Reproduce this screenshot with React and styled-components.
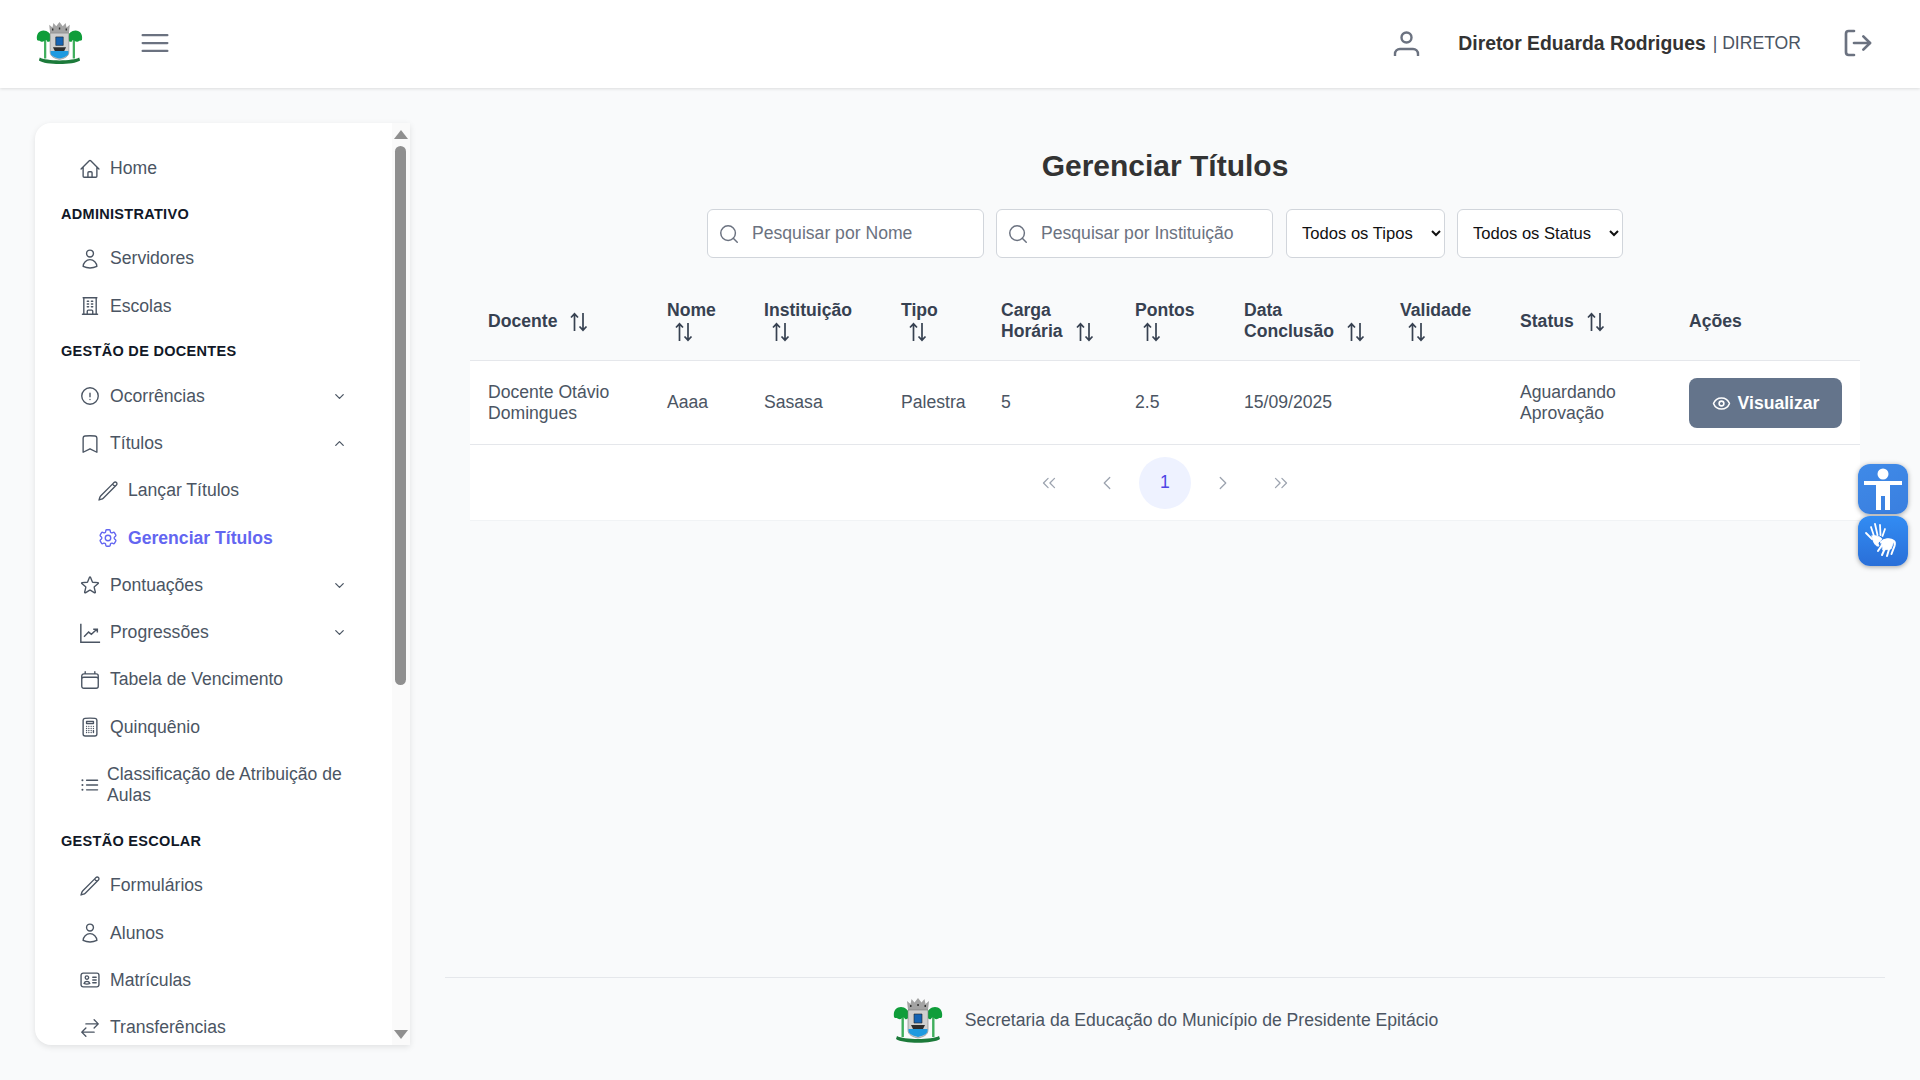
import styled, { createGlobalStyle } from "styled-components";
import { LogOut, Search, Eye, ChevronDown, ChevronUp, ChevronsLeft, ChevronLeft, ChevronRight, ChevronsRight } from "lucide-react";
import {
  HiOutlineBars3,
  HiOutlineHome,
  HiOutlineUser,
  HiOutlineBuildingOffice,
  HiOutlineExclamationCircle,
  HiOutlineBookmark,
  HiOutlinePencil,
  HiOutlineCog6Tooth,
  HiOutlineStar,
  HiOutlineCalendar,
  HiOutlineCalculator,
  HiOutlineListBullet,
  HiOutlineIdentification,
  HiOutlineArrowsRightLeft,
} from "react-icons/hi2";

const GlobalStyle = createGlobalStyle`
  html, body {
    margin: 0;
    padding: 0;
    height: 100%;
    overflow: hidden;
    background: #f9fafb;
    font-family: "Liberation Sans", Arial, sans-serif;
  }
  * { box-sizing: border-box; }
`;

const Page = styled.div`
  width: 1920px;
  height: 1080px;
  display: flex;
  flex-direction: column;
  background: #f9fafb;
`;

const Header = styled.header`
  height: 88px;
  flex-shrink: 0;
  display: flex;
  align-items: center;
  justify-content: space-between;
  padding: 0 46px 2px 36px;
  background: #fff;
  box-shadow: 0 1px 3px rgba(0, 0, 0, 0.12);
  position: relative;
  z-index: 2;
`;

const HeaderLeft = styled.div`
  display: flex;
  align-items: center;
  gap: 54px;
`;

const MenuIcon = styled(HiOutlineBars3)`
  color: #6b7280;
`;

const HeaderRight = styled.div`
  display: flex;
  align-items: center;
  color: #6b7280;
`;

const UserName = styled.span`
  margin-left: 38px;
  font-size: 19.36px;
  font-weight: 700;
  color: #333;
`;

const UserRole = styled.span`
  margin-left: 7px;
  margin-right: 41px;
  font-size: 17.6px;
  color: #4b5563;
`;

const Body = styled.div`
  flex: 1;
  display: flex;
  min-height: 0;
`;

const Sidebar = styled.aside`
  position: relative;
  width: 375px;
  height: 922px;
  margin: 35px 0 0 35px;
  flex-shrink: 0;
  background: #fff;
  border-radius: 16px 0 0 16px;
  box-shadow: 0 2px 6px rgba(0, 0, 0, 0.1);
  overflow: hidden;
`;

const SideInner = styled.nav`
  padding: 22px 0 0 0;
`;

/* the browser's scrollbar, it lies over the right edge of the panel */
const ScrollTrack = styled.div`
  position: absolute;
  top: 0;
  right: 0;
  bottom: 0;
  width: 18px;
  background: #fafafa;
`;

const ScrollThumb = styled.div`
  position: absolute;
  top: 23px;
  left: 3px;
  width: 11px;
  height: 539px;
  border-radius: 6px;
  background: #8f8f8f;
`;

const ScrollArrow = styled.div`
  position: absolute;
  left: 2px;
  ${(p) => (p.$down ? "bottom: 6px;" : "top: 7px;")}
  width: 0;
  height: 0;
  border-left: 7px solid transparent;
  border-right: 7px solid transparent;
  ${(p) => (p.$down ? "border-top" : "border-bottom")}: 9px solid #8f8f8f;
`;

const SectionTitle = styled.div`
  padding: 0 0 0 26px;
  height: 43px;
  display: flex;
  align-items: center;
  font-size: 14.5px;
  font-weight: 700;
  letter-spacing: 0.3px;
  color: #111827;
`;

const NavRow = styled.div`
  display: flex;
  align-items: center;
  min-height: ${(p) => p.$h || 47.25}px;
  margin-right: 63px;
  padding-left: ${(p) => (p.$sub ? 62 : 44)}px;
  color: ${(p) => (p.$active ? "#6366f1" : "#4b5563")};
  font-weight: ${(p) => (p.$active ? 700 : 400)};
  font-size: 17.6px;
  line-height: 21px;

  svg.main {
    width: 22px;
    height: 22px;
    flex-shrink: 0;
    margin-right: ${(p) => p.$gap ?? 9}px;
  }
`;

const NavText = styled.span`
  flex: 1;
`;

const Main = styled.main`
  flex: 1;
  min-width: 0;
  display: flex;
  flex-direction: column;
  margin: 0 35px;
`;

const Content = styled.div`
  flex: 1;
  padding: 58px 25px 0;
`;

const Title = styled.h1`
  margin: 0 0 23px;
  text-align: center;
  font-size: 30px;
  line-height: 40px;
  font-weight: 700;
  color: #333;
`;

const Filters = styled.div`
  display: flex;
  justify-content: center;
  gap: 12px;
  margin-bottom: 24px;
`;

const SearchBox = styled.label`
  width: 277px;
  height: 49px;
  display: flex;
  align-items: center;
  gap: 10px;
  padding: 0 10px;
  background: #fff;
  border: 1px solid #d1d5db;
  border-radius: 6px;
  color: #6b7280;
`;

const SearchInput = styled.input`
  flex: 1;
  min-width: 0;
  border: 0;
  outline: 0;
  background: transparent;
  font: inherit;
  font-size: 17.6px;
  color: #333;
  &::placeholder { color: #6b7280; opacity: 1; }
`;

const Select = styled.select`
  width: ${(p) => p.$w}px;
  height: 49px;
  padding: 0 0 0 11px;
  background: #fff;
  border: 1px solid #d1d5db;
  border-radius: 6px;
  font: inherit;
  font-size: 16.6px;
  color: #111;
  ${SearchBox} + & { margin-left: 1px; }
`;

const Table = styled.table`
  width: 1390px;
  table-layout: fixed;
  border-collapse: collapse;
`;

const Th = styled.th`
  padding: 18px 16px 18px 18px;
  text-align: left;
  font-size: 17.6px;
  line-height: 21px;
  font-weight: 700;
  color: #374151;
  border-bottom: 1px solid #e5e7eb;
`;

const SortIcon = styled.svg`
  width: 18px;
  height: 20px;
  margin-left: 8px;
  vertical-align: -5px;
  color: #374151;
`;

const Tr = styled.tr`
  background: #fff;
`;

const Td = styled.td`
  padding: 16px 18px;
  font-size: 17.6px;
  line-height: 21px;
  color: #4b5563;
  border-bottom: 1px solid #e5e7eb;
`;

const ViewButton = styled.button`
  width: 153px;
  height: 50px;
  margin-top: 1px;
  display: flex;
  align-items: center;
  justify-content: center;
  gap: 7px;
  border: 0;
  border-radius: 8px;
  background: #64748b;
  color: #fff;
  font: inherit;
  font-size: 17.6px;
  font-weight: 700;
`;

const Pagination = styled.div`
  height: 76px;
  display: flex;
  align-items: center;
  justify-content: center;
  gap: 6px;
  background: #fff;
  border-bottom: 1px solid #f1f3f5;
`;

const PageBtn = styled.div`
  width: 52px;
  height: 52px;
  display: flex;
  align-items: center;
  justify-content: center;
  border-radius: 50%;
  font-size: 17.6px;
  color: ${(p) => (p.$active ? "#4f46e5" : "#9ca3af")};
  background: ${(p) => (p.$active ? "#eef2ff" : "transparent")};
`;

const Footer = styled.footer`
  height: 86px;
  margin-bottom: 17px;
  flex-shrink: 0;
  display: flex;
  align-items: center;
  justify-content: center;
  gap: 21px;
  border-top: 1px solid #e5e7eb;
  font-size: 17.6px;
  color: #4b5563;
`;

const A11yDock = styled.div`
  position: fixed;
  top: 464px;
  left: 1858px;
  display: flex;
  flex-direction: column;
  gap: 2px;
`;

const A11yBtn = styled.div`
  width: 50px;
  height: 50px;
  display: flex;
  align-items: center;
  justify-content: center;
  border-radius: 12px;
  background: ${(p) => p.$bg};
  box-shadow: 0 1px 5px rgba(0, 0, 0, 0.35);
`;

const Sort = () => (
  <SortIcon viewBox="0 0 18 20" fill="none" stroke="currentColor" strokeWidth="1.7">
    <path d="M4.5 19V2M1 5.5 4.5 1.8 8 5.5" />
    <path d="M13 1v17M9.5 14.5l3.5 3.7 3.5-3.7" />
  </SortIcon>
);

const TrendIcon = () => (
  <svg className="main" viewBox="0 0 24 24" fill="none" stroke="currentColor" strokeWidth="1.6">
    <path d="M2 2v20h21" />
    <path d="m5.5 16 5-5 3 2.5 6-5.5M15.5 8h4.5v3.5" />
  </svg>
);

const UserIcon = () => (
  <svg width="27" height="25" viewBox="0 0 27 25" fill="none" stroke="currentColor" strokeWidth="2.4">
    <circle cx="13.5" cy="6.5" r="5" />
    <path d="M2 25v-2a5 5 0 0 1 5-5h13a5 5 0 0 1 5 5v2" />
  </svg>
);

const Logo = ({ width, height }) => (
  <svg width={width} height={height} viewBox="0 0 50 48">
    <path d="M4 39c6 4 36 4 42 0l1 3c-7 5-37 5-44 0z" fill="#1c7a3a" />
    <path d="M8.500 20h2.400v20H8.500zM39.100 20h2.400v20h-2.400z" fill="#3fae5c" />
    <path d="M1 20c-1-6 2-10 7-10 4 0 8 3 8 8 0 3-2 5-4 4-1-2-2-2-3-1-2 2-4 1-5 0-1 0-3 0-3-1zM49 20c1-6-2-10-7-10-4 0-8 3-8 8 0 3 2 5 4 4 1-2 2-2 3-1 2 2 4 1 5 0 1 0 3 0 3-1z" fill="#0f9d3a" />
    <path d="M14 4l3.500 3 1-5 3 3.500L25 1l3.500 4.500 3-3.500 1 5L36 4l-1 9H15z" fill="#a3a3a3" />
    <path d="M17 8h1.500v2H17zM24.300 7h1.500v2h-1.500zM31.500 8H33v2h-1.500z" fill="#333" />
    <path d="M15 13h20v20c0 5-5 7-10 8-5-1-10-3-10-8z" fill="#cfcfcf" stroke="#7a7a7a" strokeWidth=".6" />
    <path d="M21 17h8v9h-8z" fill="#1463b4" stroke="#222" strokeWidth=".6" />
    <path d="M18 28h14l-2 4H20z" fill="#2c2c2c" />
    <path d="M15.500 32h19v2c0 3-5 5-9.500 6-4.500-1-9.500-3-9.500-6z" fill="#1e9ae0" />
  </svg>
);

const BodyIcon = () => (
  <svg width="42" height="46" viewBox="0 0 42 46" fill="#fff">
    <circle cx="21" cy="8" r="5.500" />
    <path d="M2 15h38v4H28v25h-5V30h-4v14h-5V19H2z" />
  </svg>
);

const HandsIcon = () => (
  <svg width="38" height="38" viewBox="0 0 38 38" fill="none" stroke="#fff" strokeLinecap="round">
    <path d="M7 5l3 9M11 2l2.500 11M16 3l.5 10M21 7l-2.500 7M2 11l6 6" strokeWidth="1.800" />
    <path d="M8 14c3-1 8 0 10 3l-4 4 1 3c-3 1-6-3-7-10z" fill="#fff" strokeWidth=".8" />
    <path d="M17 20c3-3 9-4 13-1 1.500 1 1 3 .5 5l-3 8M26 24l-3 10M22 24l-4 9M18 23l-4 6" strokeWidth="2" />
    <path d="M17 20c3-3 9-4 13-1l-3 8-8 1z" fill="#fff" strokeWidth=".8" />
  </svg>
);

const NAV = [
  { t: "Home", I: HiOutlineHome },
  { section: "ADMINISTRATIVO" },
  { t: "Servidores", I: HiOutlineUser },
  { t: "Escolas", I: HiOutlineBuildingOffice },
  { section: "GESTÃO DE DOCENTES" },
  { t: "Ocorrências", I: HiOutlineExclamationCircle, chev: "down" },
  { t: "Títulos", I: HiOutlineBookmark, chev: "up" },
  { t: "Lançar Títulos", I: HiOutlinePencil, sub: true },
  { t: "Gerenciar Títulos", I: HiOutlineCog6Tooth, sub: true, active: true },
  { t: "Pontuações", I: HiOutlineStar, chev: "down" },
  { t: "Progressões", I: TrendIcon, chev: "down", custom: true },
  { t: "Tabela de Vencimento", I: HiOutlineCalendar },
  { t: "Quinquênio", I: HiOutlineCalculator },
  { t: "Classificação de Atribuição de Aulas", I: HiOutlineListBullet, h: 68.5, gap: 6 },
  { section: "GESTÃO ESCOLAR" },
  { t: "Formulários", I: HiOutlinePencil },
  { t: "Alunos", I: HiOutlineUser },
  { t: "Matrículas", I: HiOutlineIdentification },
  { t: "Transferências", I: HiOutlineArrowsRightLeft },
];

const COLS = [179, 97, 137, 100, 134, 109, 156, 120, 169, 189];

const HEADS = [
  { t: "Docente", sort: true },
  { t: "Nome", sort: true },
  { t: "Instituição", sort: true },
  { t: "Tipo", sort: true },
  { t: "Carga Horária", sort: true },
  { t: "Pontos", sort: true },
  { t: "Data Conclusão", sort: true },
  { t: "Validade", sort: true },
  { t: "Status", sort: true },
  { t: "Ações" },
];

const CELLS = ["Docente Otávio Domingues", "Aaaa", "Sasasa", "Palestra", "5", "2.5", "15/09/2025", "", "Aguardando Aprovação"];

export default function App() {
  return (
    <Page>
      <GlobalStyle />
      <Header>
        <HeaderLeft>
          <Logo width={47} height={45} />
          <MenuIcon size={36} />
        </HeaderLeft>
        <HeaderRight>
          <UserIcon />
          <UserName>Diretor Eduarda Rodrigues</UserName>
          <UserRole>| DIRETOR</UserRole>
          <LogOut size={32} strokeWidth={2} />
        </HeaderRight>
      </Header>
      <Body>
        <Sidebar>
          <SideInner>
            {NAV.map((n) =>
              n.section ? (
                <SectionTitle key={n.section}>{n.section}</SectionTitle>
              ) : (
                <NavRow key={n.t + (n.sub ? "s" : "")} $sub={n.sub} $active={n.active} $h={n.h} $gap={n.gap}>
                  {n.custom ? <n.I /> : <n.I className="main" />}
                  <NavText>{n.t}</NavText>
                  {n.chev === "down" && <ChevronDown size={15} strokeWidth={2} />}
                  {n.chev === "up" && <ChevronUp size={15} strokeWidth={2} />}
                </NavRow>
              )
            )}
          </SideInner>
          <ScrollTrack>
            <ScrollArrow />
            <ScrollThumb />
            <ScrollArrow $down />
          </ScrollTrack>
        </Sidebar>
        <Main>
          <Content>
            <Title>Gerenciar Títulos</Title>
            <Filters>
              <SearchBox>
                <Search size={22} strokeWidth={1.6} />
                <SearchInput placeholder="Pesquisar por Nome" />
              </SearchBox>
              <SearchBox>
                <Search size={22} strokeWidth={1.6} />
                <SearchInput placeholder="Pesquisar por Instituição" />
              </SearchBox>
              <Select $w={159} defaultValue="t">
                <option value="t">Todos os Tipos</option>
              </Select>
              <Select $w={166} defaultValue="s">
                <option value="s">Todos os Status</option>
              </Select>
            </Filters>
            <Table>
              <colgroup>
                {COLS.map((w, i) => (
                  <col key={i} width={w} />
                ))}
              </colgroup>
              <thead>
                <tr>
                  {HEADS.map((h) => (
                    <Th key={h.t}>
                      {h.t} {h.sort && <Sort />}
                    </Th>
                  ))}
                </tr>
              </thead>
              <tbody>
                <Tr>
                  {CELLS.map((c, i) => (
                    <Td key={i}>{c}</Td>
                  ))}
                  <Td>
                    <ViewButton>
                      <Eye size={19} strokeWidth={2} />
                      Visualizar
                    </ViewButton>
                  </Td>
                </Tr>
              </tbody>
            </Table>
            <Pagination>
              <PageBtn><ChevronsLeft size={22} strokeWidth={1.4} /></PageBtn>
              <PageBtn><ChevronLeft size={22} strokeWidth={1.4} /></PageBtn>
              <PageBtn $active>1</PageBtn>
              <PageBtn><ChevronRight size={22} strokeWidth={1.4} /></PageBtn>
              <PageBtn><ChevronsRight size={22} strokeWidth={1.4} /></PageBtn>
            </Pagination>
          </Content>
          <Footer>
            <Logo width={52} height={48} />
            <span>Secretaria da Educação do Município de Presidente Epitácio</span>
          </Footer>
        </Main>
      </Body>
      <A11yDock>
        <A11yBtn $bg="linear-gradient(160deg, #3f8ae8, #3a7fdf)"><BodyIcon /></A11yBtn>
        <A11yBtn $bg="linear-gradient(180deg, #328cf3, #2a6fd8)"><HandsIcon /></A11yBtn>
      </A11yDock>
    </Page>
  );
}
